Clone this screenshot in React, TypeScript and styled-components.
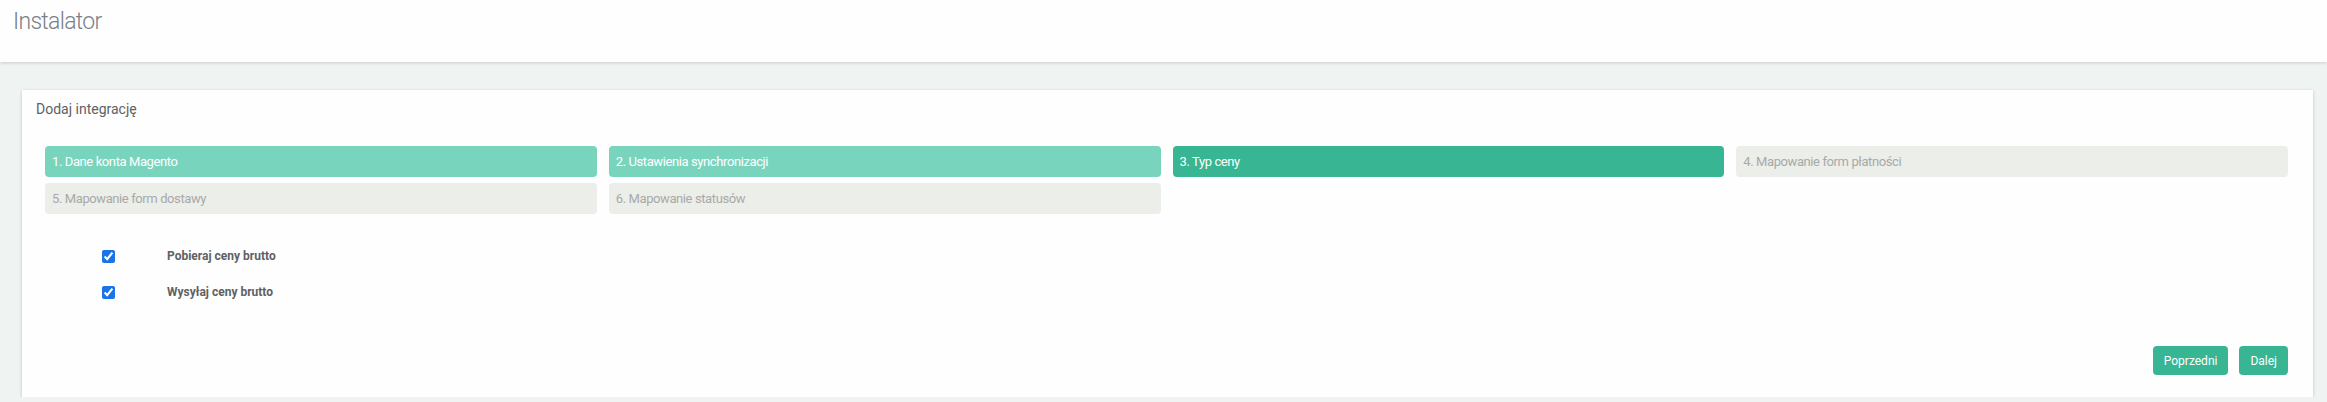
import React from "react";
import styled, { createGlobalStyle } from "styled-components";

const GlobalStyle = createGlobalStyle`
  html, body {
    margin: 0;
    padding: 0;
    background: #eff3f1;
    font-family: Roboto, "Liberation Sans", Arial, sans-serif;
  }
  * { box-sizing: border-box; }
`;

const Header = styled.header`
  height: 62px;
  background: #fdfefd;
  box-shadow: 0 1px 3px rgba(0, 0, 0, 0.16);
  padding: 10px 13px 0;
  position: relative;
  z-index: 1;
`;

const PageTitle = styled.h1`
  margin: 0;
  font-size: 23px;
  line-height: 24px;
  font-weight: 300;
  letter-spacing: -0.7px;
  color: #7a7f86;
`;

const Main = styled.main`
  padding: 28px 14px 0 22px;
`;

const Card = styled.section`
  background: #fdfefd;
  box-shadow: 0 1px 3px rgba(0, 0, 0, 0.22);
  min-height: 307px;
`;

const CardHeader = styled.div`
  padding: 9px 14px 0;
`;

const CardTitle = styled.h2`
  margin: 0;
  font-size: 14px;
  line-height: 20px;
  font-weight: 400;
  color: #5e6166;
`;

const CardBody = styled.div`
  padding: 27px 25px 22px 23px;
`;

const Steps = styled.div`
  display: grid;
  grid-template-columns: repeat(4, 1fr);
  column-gap: 12px;
  row-gap: 6px;
`;

type StepState = "done" | "active" | "todo";

const stepBg: Record<StepState, string> = {
  done: "#79d4bd",
  active: "#38b593",
  todo: "#eceeea",
};
const stepColor: Record<StepState, string> = {
  done: "#ffffff",
  active: "#ffffff",
  todo: "#a8aaa7",
};

const Step = styled.div<{ $state: StepState }>`
  height: 31px;
  line-height: 31px;
  padding: 0 7px;
  border-radius: 4px;
  font-size: 13px;
  letter-spacing: -0.4px;
  background: ${(p) => stepBg[p.$state]};
  color: ${(p) => stepColor[p.$state]};
  white-space: nowrap;
  overflow: hidden;
`;

const Form = styled.div`
  margin-top: 24px;
`;

const FieldRow = styled.label`
  display: grid;
  grid-template-columns: 122px auto;
  align-items: center;
  height: 36px;
  cursor: pointer;
`;

const Check = styled.input`
  margin: 0 0 0 57px;
  width: 13px;
  height: 13px;
  accent-color: #1a73e8;
`;

const FieldLabel = styled.span`
  font-size: 12px;
  font-weight: 700;
  color: #5f6164;
`;

const Footer = styled.div`
  display: flex;
  justify-content: flex-end;
  gap: 11px;
  margin-top: 36px;
`;

const Button = styled.button`
  height: 29px;
  padding: 0 11px;
  border: none;
  border-radius: 4px;
  background: #38b593;
  color: #ffffff;
  font-family: Roboto, "Liberation Sans", Arial, sans-serif;
  font-size: 12px;
  cursor: pointer;
`;

const steps: { label: string; state: StepState }[] = [
  { label: "1. Dane konta Magento", state: "done" },
  { label: "2. Ustawienia synchronizacji", state: "done" },
  { label: "3. Typ ceny", state: "active" },
  { label: "4. Mapowanie form płatności", state: "todo" },
  { label: "5. Mapowanie form dostawy", state: "todo" },
  { label: "6. Mapowanie statusów", state: "todo" },
];

export default function App() {
  return (
    <>
      <GlobalStyle />
      <Header>
        <PageTitle>Instalator</PageTitle>
      </Header>
      <Main>
        <Card>
          <CardHeader>
            <CardTitle>Dodaj integrację</CardTitle>
          </CardHeader>
          <CardBody>
            <Steps>
              {steps.map((s) => (
                <Step key={s.label} $state={s.state}>
                  {s.label}
                </Step>
              ))}
            </Steps>
            <Form>
              <FieldRow>
                <Check type="checkbox" defaultChecked />
                <FieldLabel>Pobieraj ceny brutto</FieldLabel>
              </FieldRow>
              <FieldRow>
                <Check type="checkbox" defaultChecked />
                <FieldLabel>Wysyłaj ceny brutto</FieldLabel>
              </FieldRow>
            </Form>
            <Footer>
              <Button type="button">Poprzedni</Button>
              <Button type="button">Dalej</Button>
            </Footer>
          </CardBody>
        </Card>
      </Main>
    </>
  );
}
